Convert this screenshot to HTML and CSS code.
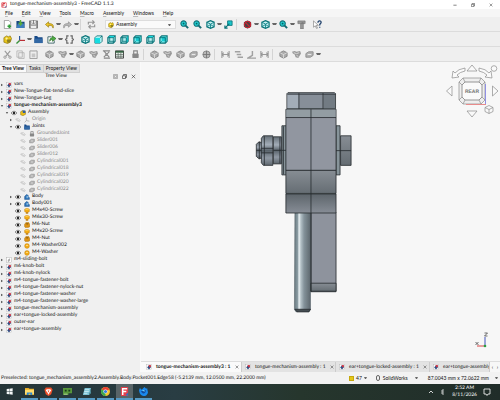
FILE: index.html
```
<!DOCTYPE html>
<html lang="en">
<head>
<meta charset="utf-8">
<title>tongue-mechanism-assembly3 - FreeCAD 1.1.3</title>
<link rel="stylesheet" href="styles.css">
</head>
<body>
<svg class="sprites" aria-hidden="true">
<defs>
<linearGradient id="steel" x1="0" x2="0" y1="0" y2="1"><stop offset="0" stop-color="#878d94"/><stop offset="1" stop-color="#656d73"/></linearGradient>
<linearGradient id="steelUp" x1="0" x2="0" y1="0" y2="1"><stop offset="0" stop-color="#5d656b"/><stop offset="1" stop-color="#878d96"/></linearGradient>
<linearGradient id="nut" x1="0" x2="0" y1="0" y2="1"><stop offset="0" stop-color="#667078"/><stop offset=".3" stop-color="#a3adb8"/><stop offset=".5" stop-color="#59636b"/><stop offset=".75" stop-color="#9099a4"/><stop offset="1" stop-color="#5e676e"/></linearGradient>
<linearGradient id="rod" x1="0" x2="1" y1="0" y2="0"><stop offset="0" stop-color="#687980"/><stop offset=".22" stop-color="#8fa0a7"/><stop offset=".28" stop-color="#f0f6f8"/><stop offset=".4" stop-color="#b4c1c7"/><stop offset=".6" stop-color="#84929a"/><stop offset="1" stop-color="#5e686e"/></linearGradient>
</defs>
<symbol id="app" viewBox="0 0 10 10"><rect x="1" y="1" width="8" height="8" rx="1" fill="#fff" stroke="#e03542"/><path d="M3 8V2.500h4M3 5h3" stroke="#d42c38" stroke-width="1.500" fill="none"/><path d="M6 9l3-3v3z" fill="#3566a5"/></symbol>
<symbol id="doc" viewBox="0 0 10 10"><rect x="1" y=".500" width="8" height="9" fill="#fff" stroke="#aaa" stroke-width=".600"/><path d="M2 6l3-4 3 1v3L5 9z" fill="#314f83"/><path d="M4 2l4-.500v3L6 6z" fill="#db303e"/></symbol>
<symbol id="docgray" viewBox="0 0 10 10"><rect x="1" y=".500" width="8" height="9" fill="#fff" stroke="#999" stroke-width=".600"/><path d="M3 8V5l3-3 1 3-2 3z" fill="#aaa"/></symbol>
<symbol id="new" viewBox="0 0 10 10"><path d="M1.500.500h5l2 2v7h-7z" fill="#fff" stroke="#777" stroke-width=".700"/><path d="M7 5v4M5 7h4" stroke="#2e9e36" stroke-width="1.700"/></symbol>
<symbol id="open" viewBox="0 0 10 10"><path d="M.500 9V1h3l1 1h5v7z" fill="#17457f"/><path d="M2 4h7v5H.500z" fill="#3e7fbb"/><path d="M5 0v4M3 3l2 2.500L7 3" stroke="#5caf35" stroke-width="1.500" fill="none"/></symbol>
<symbol id="save" viewBox="0 0 10 10"><path d="M.500 1h9v8h-9z" fill="#929292" stroke="#555" stroke-width=".700"/><path d="M2.500 1h5v4h-5zM2 6.500h6V9H2z" fill="#eee"/><path d="M5 0v4M3.500 3L5 4.500 6.500 3" stroke="#777" fill="none"/></symbol>
<symbol id="undo" viewBox="0 0 10 10"><path d="M9 9c1-4-1-5-5-5V2L.500 5 4 8V6c3 0 4 0 5 3z" fill="#f0c728" stroke="#8c7209" stroke-width=".700"/></symbol>
<symbol id="redo" viewBox="0 0 10 10"><path d="M1 9C0 5 2 4 6 4V2l3.500 3L6 8V6C3 6 2 6 1 9z" fill="#bbb" stroke="#888" stroke-width=".700"/></symbol>
<symbol id="refresh" viewBox="0 0 10 10"><path d="M1.500 5V2.500h6M8.500 5v2.500h-6M6 .500l2 2-2 2M4 5.500l-2 2 2 2" fill="none" stroke="#969696" stroke-width="1.300"/></symbol>
<symbol id="assembly" viewBox="0 0 10 10"><path d="M1 3l3-2 2 1 2-1 1.500 3L8 8 5 9.500 1 8z" fill="#e9c61a" stroke="#866c05" stroke-width=".700"/><path d="M4 5h5l-1 3-3 1z" fill="#8f8122"/><circle cx="4" cy="4" r="1.200" fill="#fff3a0"/></symbol>
<symbol id="asmblue" viewBox="0 0 10 10"><path d="M1 3l3-2 5 1 .500 5L5 9.500 1 8z" fill="#e9bd18" stroke="#806805" stroke-width=".700"/><path d="M4 1h5v4H5z" fill="#315ea0"/></symbol>
<symbol id="zoom" viewBox="0 0 10 10"><path d="M6 6l3 3" stroke="#136b73" stroke-width="2.200"/><circle cx="4" cy="4" r="3" fill="#20cdcf" stroke="#127279" stroke-width="1.200"/><path d="M3 4h2M4 3v2" stroke="#075258" stroke-width=".800"/></symbol>
<symbol id="cube" viewBox="0 0 10 10"><path d="M1 2.500L5 .700l4 1.800v5L5 9.300 1 7.500z" fill="#c9f2f2" stroke="#087277" stroke-width="1.300"/><path d="M1 2.500L5 4.500l4-2M5 4.500v5M1 7.500L5 5l4 2.500" fill="none" stroke="#14858a" stroke-width="1"/></symbol>
<symbol id="front" viewBox="0 0 10 10"><path d="M1 3l2-2h6v6L7 9H1z" fill="#dfffff" stroke="#087277"/><path d="M1 3h6v6H1z" fill="#15dce1"/><path d="M7 3l2-2" stroke="#087277"/></symbol>
<symbol id="top" viewBox="0 0 10 10"><path d="M1 3l2-2h6v6L7 9H1z" fill="#bff3f3" stroke="#087277" stroke-width="1.300"/><path d="M1 3l2-2h6L7 3z" fill="#15dce1"/><path d="M1 3h6v6M7 3l2-2M3 2v5h5M1 9l2-2" stroke="#087277" stroke-width=".900" fill="none"/></symbol>
<symbol id="right" viewBox="0 0 10 10"><path d="M1 3l2-2h6v6L7 9H1z" fill="#afeeee" stroke="#087277" stroke-width="1.300"/><path d="M7 3l2-2v6L7 9z" fill="#0ebec5"/><path d="M1 3h6v6M3 2v5h4M1 9l2-2" stroke="#087277" stroke-width=".900" fill="none"/></symbol>
<symbol id="rear" viewBox="0 0 10 10"><path d="M1 3l2-2h6v6L7 9H1z" fill="#7ef3f3" stroke="#087277" stroke-width="1.300"/><path d="M3 2h5v5H3z" fill="#18cbd0"/><path d="M1 3h6v6M1 9l2-2" stroke="#087277" fill="none"/></symbol>
<symbol id="link" viewBox="0 0 10 10"><path d="M4 1h5v5H4z" fill="#19c7cc" stroke="#117b80"/><path d="M6 4L1 9M1 6v3h3" stroke="#087277" stroke-width="1.300" fill="none"/></symbol>
<symbol id="nosel" viewBox="0 0 10 10"><path d="M1 2.500L5 .500l4 2v5l-4 2-4-2z" fill="#274c51"/><circle cx="5" cy="5" r="3.500" fill="#444" stroke="#c22633" stroke-width="1.300"/><path d="M2.500 2.500l5 5" stroke="#c22633" stroke-width="1.400"/></symbol>
<symbol id="measure" viewBox="0 0 10 10"><path d="M1 1h8v3H1zM5 3h2v7H4V4" fill="#999" stroke="#707070" stroke-width=".700"/></symbol>
<symbol id="help" viewBox="0 0 10 10"><path d="M.500 1v7l2-1.500 1.500 3L5 9 3.500 6H6z" fill="#fff" stroke="#777" stroke-width=".700"/><path d="M5.500 3c0-3 4-2.500 3.500 0L7.500 5v1M7.500 7.500v1" stroke="#24446e" stroke-width="1.400" fill="none"/></symbol>
<symbol id="axes" viewBox="0 0 10 10"><path d="M4 1v5" stroke="#28579b" stroke-width="1.300"/><path d="M4 6L.500 9.500" stroke="#38933c" stroke-width="1.500"/><path d="M4 6h6" stroke="#b92f35" stroke-width="1.300"/></symbol>
<symbol id="folder" viewBox="0 0 10 10"><path d="M.500 9V1h3l1 1.500h5V9z" fill="#174987"/><path d="M.500 4h9v5h-9z" fill="#3268a5"/></symbol>
<symbol id="export" viewBox="0 0 10 10"><path d="M5 2H1v7h7V6" fill="#fff" stroke="#376064"/><path d="M3 7c0-3 1-4 3-4V1l4 3-4 3V5C5 5 4 5 3 7z" fill="#4cae41" stroke="#246820" stroke-width=".700"/></symbol>
<symbol id="var" viewBox="0 0 10 10"><path d="M4 1H2v3L.500 5 2 6v3h2M6 1h2v3l1.500 1L8 6v3H6" fill="none" stroke="#666" stroke-width="1.300"/></symbol>
<symbol id="cut" viewBox="0 0 10 10"><path d="M2 1l5 6M8 1L3 7" stroke="#999" stroke-width="1.200"/><circle cx="2.200" cy="8" r="1.300" fill="none" stroke="#999"/><circle cx="7.800" cy="8" r="1.300" fill="none" stroke="#999"/></symbol>
<symbol id="copy" viewBox="0 0 10 10"><path d="M1 1h6v7H1zM3 3h6v6.500H3z" fill="#eee" stroke="#aaa" stroke-width=".800"/></symbol>
<symbol id="paste" viewBox="0 0 10 10"><path d="M1 1h8v8.500H1z" fill="#eee" stroke="#999"/><path d="M3 .500h4v1.500H3zM3 4h4v4H3z" fill="#c6c6c6"/></symbol>
<symbol id="part" viewBox="0 0 10 10"><path d="M1 3l4-2 4 2v4L5 9 1 7z" fill="#aaa" stroke="#858585"/><path d="M1 3l4 2 4-2M5 5v4" stroke="#e4e4e4" stroke-width=".800" fill="none"/></symbol>
<symbol id="parts" viewBox="0 0 10 10"><path d="M0 2l3-1 2 1 4-1 1 3-3 5-3-1-1-3-2-1z" fill="#999"/><path d="M2 3l3 1 3-1M5 6l2 1" stroke="#ddd" fill="none"/></symbol>
<symbol id="solve" viewBox="0 0 10 10"><path d="M1 1h8M2 9h7M2 1l6 7M8 2L2 8" stroke="#888" stroke-width="1.200"/><circle cx="5" cy="5" r="1.500" fill="#999"/></symbol>
<symbol id="table" viewBox="0 0 10 10"><path d="M.500 1h9v8h-9z" fill="#e7eee8" stroke="#353535"/><path d="M.500 1h9v2h-9z" fill="#356343"/><path d="M1 5h8M1 7h8M3.500 3v6M6.500 3v6" stroke="#536159" stroke-width=".700"/></symbol>
<symbol id="lock" viewBox="0 0 10 10"><path d="M3 5V1h4v4" fill="none" stroke="#888" stroke-width="1.300"/><rect x="1.500" y="4" width="7" height="5" rx="1" fill="#888"/></symbol>
<symbol id="ball" viewBox="0 0 10 10"><circle cx="5" cy="5" r="4" fill="#b9b9b9" stroke="#858585"/><path d="M5 1v8M1 5h8" stroke="#777"/></symbol>
<symbol id="slider" viewBox="0 0 10 10"><path d="M1 4l3-2h5v4L6 8H1z" fill="#b1b1b1" stroke="#8d8d8d"/><path d="M3 5h4" stroke="#eee"/></symbol>
<symbol id="distance" viewBox="0 0 10 10"><path d="M1 1v8M9 1v8M1 5h8M3 3L1 5l2 2M7 3l2 2-2 2" fill="none" stroke="#999" stroke-width="1.200"/></symbol>
<symbol id="parallel" viewBox="0 0 10 10"><path d="M1 2h6M3 5h5M4 8h6" stroke="#a1a1a1" stroke-width="1.700"/></symbol>
<symbol id="angle" viewBox="0 0 10 10"><path d="M6 1v5L1 9h9" fill="none" stroke="#a1a1a1" stroke-width="1.600"/></symbol>
<symbol id="eye" viewBox="0 0 10 10"><path d="M0 5q5-6 10 0-5 6-10 0z" fill="#eee" stroke="#555"/><circle cx="5" cy="4.800" r="2" fill="#222"/></symbol>
<symbol id="eyeoff" viewBox="0 0 10 10"><path d="M1 4q5-4 8 2-4 3-8-2zM2 3l6 5" fill="none" stroke="#bbb"/></symbol>
<symbol id="origin" viewBox="0 0 10 10"><path d="M4 1v5l5 1M4 6L1 9" stroke="#a6a6a6" stroke-width="1.200" fill="none"/></symbol>
<symbol id="body" viewBox="0 0 10 10"><path d="M1 4l3-3 3 1v3l2 1v3H1z" fill="#2b73b9" stroke="#174981" stroke-width=".700"/><path d="M4 3h3v4H4z" fill="#7eb1da"/></symbol>
<symbol id="screw" viewBox="0 0 10 10"><path d="M1 2q4-3 8 0v4q-4 3-8 0z" fill="#f4ad13" stroke="#b87707" stroke-width=".600"/><path d="M3 7h4v2.500H3z" fill="#bd7c12"/><path d="M2.500 2.500q3-1.500 5 0" stroke="#ffe28a" stroke-width="1.200" fill="none"/></symbol>
<symbol id="hexnut" viewBox="0 0 10 10"><path d="M1 4l2-3h5l1.500 3v4L7 9H2L1 8z" fill="#df9412" stroke="#9c6404" stroke-width=".700"/><ellipse cx="5.300" cy="3" rx="2" ry="1" fill="#835610"/></symbol>
<symbol id="washer" viewBox="0 0 10 10"><circle cx="5" cy="5" r="4" fill="#f2ab16" stroke="#c17f0c" stroke-width=".700"/><ellipse cx="5" cy="4" rx="2" ry="1" fill="#ffd879"/></symbol>
<symbol id="closed" viewBox="0 0 10 10"><path d="M3 2l4 3-4 3z" fill="#333"/></symbol>
<symbol id="opened" viewBox="0 0 10 10"><path d="M2 3h6L5 7z" fill="#333"/></symbol>
<symbol id="min" viewBox="0 0 10 10"><path d="M1 5.500h8" stroke="#333" stroke-width="1.500"/></symbol>
<symbol id="restore" viewBox="0 0 10 10"><path d="M1 3.500h6v5.500H1zM3 3V1h6v6H7" fill="none" stroke="#333" stroke-width="1.300"/></symbol>
<symbol id="box" viewBox="0 0 10 10"><path d="M1 1h8v8H1zM3 3h4v4H3z" fill="none" stroke="#777"/></symbol>
<symbol id="close" viewBox="0 0 10 10"><path d="M1.500 1.500l7 7M8.500 1.500l-7 7" stroke="#333" stroke-width="1.200"/></symbol>
<symbol id="win" viewBox="0 0 10 10"><path d="M1 1.500l3.500-.500v3.700H1zM5 1l4.500-.500v4.200H5zM1 5.300h3.500V9L1 8.500zM5 5.300h4.500v4.200L5 9z" fill="#f4f7f8"/></symbol>
<symbol id="files" viewBox="0 0 10 10"><path d="M0 1h4l1 1h5v7H0z" fill="#e5aa24"/><path d="M0 3h10v5H0z" fill="#ffdc6c"/><path d="M2 6h6v3H6V7.500H4V9H2z" fill="#2c87ce"/></symbol>
<symbol id="brave" viewBox="0 0 10 10"><path d="M2 .500h6L9.500 3 8 8 5 10 2 8 .500 3z" fill="#f0512c"/><path d="M3 2.500h4L8 4 6 6.500 5 8.500 4 6.500 2 4z" fill="#fff"/><path d="M4 4h2L5 6z" fill="#ea4b28"/></symbol>
<symbol id="chip" viewBox="0 0 10 10"><path d="M0 1h10v6H6v2H0z" fill="#58973c"/><path d="M2 3h2v2H2zM6 3h2v2H6z" fill="#18391d"/><path d="M1 8h4" stroke="#b7d69f"/></symbol>
<symbol id="note" viewBox="0 0 10 10"><path d="M3 1h7L8 9H1z" fill="#7cc3d6"/><path d="M3 3h5M2.500 5h5M2 7h4" stroke="#eafcff" stroke-width=".700"/><path d="M8 9l2-8v6z" fill="#4f8e9d"/></symbol>
<symbol id="chrome" viewBox="0 0 10 10"><circle cx="5" cy="5" r="5" fill="#f4c430"/><path d="M5 5L.700 2.500A5 5 0 0 1 9.400 2.500z" fill="#e84135"/><path d="M5 5L.700 2.500A5 5 0 0 0 5 10z" fill="#39a653"/><circle cx="5" cy="5" r="2.300" fill="#fff"/><circle cx="5" cy="5" r="1.800" fill="#367be0"/></symbol>
<symbol id="freecad" viewBox="0 0 10 10"><path d="M1 0h8v10H1z" fill="#e33e4b"/><path d="M3 9V2h5M3 5h4" stroke="#fff" stroke-width="1.700" fill="none"/><path d="M6 9l3-3v4z" fill="#3370c0"/></symbol>
<symbol id="fox" viewBox="0 0 10 10"><path d="M0 4l1-3 2 2 3-3 2 2 1-1 1 5q-1 4-5 4T0 4z" fill="#198aee"/><path d="M2 5q4-3 6-1-1 4-4 3z" fill="#124b9d"/><path d="M3 4q3-2 4 1-2 0-4-1z" fill="#70d7fc"/></symbol>
</svg>
<div class="window">
<header class="titlebar"><svg class="icon"><use href="#app"/></svg><span class="title">tongue-mechanism-assembly3 - FreeCAD 1.1.3</span>
<div class="caption"><button aria-label="Minimize"><svg><use href="#min"/></svg></button><button aria-label="Restore"><svg><use href="#restore"/></svg></button><button aria-label="Close"><svg><use href="#close"/></svg></button></div></header>
<nav class="menu"><button><u>F</u>ile</button><button><u>E</u>dit</button><button><u>V</u>iew</button><button><u>T</u>ools</button><button><u>M</u>acro</button><button><u>A</u>ssembly</button><button><u>W</u>indows</button><button><u>H</u>elp</button></nav>
<div class="toolbar">
<button class="tool" aria-label="New"><svg><use href="#new"/></svg></button><button class="tool" aria-label="Open"><svg><use href="#open"/></svg></button><button class="tool" aria-label="Save"><svg><use href="#save"/></svg></button><i class="space"></i>
<button class="tool drop" aria-label="Undo"><svg><use href="#undo"/></svg></button><button class="tool drop" aria-label="Redo"><svg><use href="#redo"/></svg></button><i class="sep"></i><button class="tool" aria-label="Refresh"><svg><use href="#refresh"/></svg></button>
<div class="workbench"><svg class="icon"><use href="#assembly"/></svg><select aria-label="Workbench"><option>Assembly</option></select><i class="caret"></i></div>
<button class="tool" aria-label="Fit all"><svg><use href="#zoom"/></svg></button><button class="tool" aria-label="Fit selection"><svg><use href="#zoom"/></svg></button><button class="tool drop" aria-label="View"><svg><use href="#cube"/></svg></button><button class="tool" aria-label="Link"><svg><use href="#link"/></svg></button><i class="sep"></i>
<button class="tool drop" aria-label="Draw style"><svg><use href="#nosel"/></svg></button><button class="tool drop" aria-label="Bounding box"><svg><use href="#cube"/></svg></button><button class="tool drop" aria-label="Selection view"><svg><use href="#zoom"/></svg></button><button class="tool" aria-label="Measure"><svg><use href="#measure"/></svg></button><i class="space"></i><button class="tool" aria-label="Help"><svg><use href="#help"/></svg></button>
</div>
<div class="toolbar">
<button class="tool" aria-label="Create part"><svg><use href="#assembly"/></svg></button><button class="tool drop" aria-label="Datums"><svg><use href="#axes"/></svg></button><button class="tool" aria-label="Group"><svg><use href="#folder"/></svg></button><button class="tool drop" aria-label="Make link"><svg><use href="#export"/></svg></button><button class="tool" aria-label="Variables"><svg><use href="#var"/></svg></button><i class="space"></i>
<button class="tool" aria-label="Isometric"><svg><use href="#cube"/></svg></button><button class="tool" aria-label="Front"><svg><use href="#front"/></svg></button><button class="tool" aria-label="Top"><svg><use href="#top"/></svg></button><button class="tool" aria-label="Right"><svg><use href="#right"/></svg></button><button class="tool" aria-label="Rear"><svg><use href="#rear"/></svg></button><button class="tool" aria-label="Bottom"><svg><use href="#top"/></svg></button><button class="tool" aria-label="Left"><svg><use href="#rear"/></svg></button>
</div>
<div class="toolbar">
<button class="tool" aria-label="Cut"><svg><use href="#cut"/></svg></button><button class="tool" aria-label="Copy"><svg><use href="#copy"/></svg></button><button class="tool" aria-label="Paste"><svg><use href="#paste"/></svg></button><i class="space"></i>
<button class="tool" aria-label="Assembly"><svg><use href="#part"/></svg></button><button class="tool drop" aria-label="Insert"><svg><use href="#parts"/></svg></button><button class="tool" aria-label="Solve"><svg><use href="#part"/></svg></button><button class="tool" aria-label="Explode"><svg><use href="#parts"/></svg></button><button class="tool" aria-label="Simulation"><svg><use href="#solve"/></svg></button><button class="tool" aria-label="Bill of materials"><svg><use href="#table"/></svg></button><i class="space"></i><button class="tool" aria-label="Ground"><svg><use href="#lock"/></svg></button><i class="sep"></i>
<button class="tool" aria-label="Fixed"><svg><use href="#part"/></svg></button><button class="tool" aria-label="Revolute"><svg><use href="#parts"/></svg></button><button class="tool" aria-label="Cylindrical"><svg><use href="#part"/></svg></button><button class="tool" aria-label="Slider"><svg><use href="#slider"/></svg></button><button class="tool" aria-label="Ball"><svg><use href="#ball"/></svg></button><i class="sep"></i>
<button class="tool" aria-label="Distance"><svg><use href="#distance"/></svg></button><button class="tool" aria-label="Parallel"><svg><use href="#parallel"/></svg></button><button class="tool" aria-label="Perpendicular"><svg><use href="#angle"/></svg></button><button class="tool" aria-label="Angle"><svg><use href="#distance"/></svg></button><i class="sep"></i>
<button class="tool" aria-label="Rack and pinion"><svg><use href="#part"/></svg></button><button class="tool" aria-label="Screw"><svg><use href="#parts"/></svg></button><button class="tool drop" aria-label="Gears"><svg><use href="#slider"/></svg></button>
</div>
<main class="work">
<aside class="side">
<div class="sidetabs"><button class="on">Tree View</button><button>Tasks</button><button>Property View</button></div>
<div class="dock"><span>Tree View</span><div class="dockbtns"><button aria-label="Overlay"><svg><use href="#box"/></svg></button><button aria-label="Float"><svg><use href="#restore"/></svg></button><button aria-label="Close panel"><svg><use href="#close"/></svg></button></div></div>
<ul class="tree">
<li><svg><use href="#closed"/></svg><svg class="kind"><use href="#doc"/></svg>vars</li>
<li><svg><use href="#closed"/></svg><svg class="kind"><use href="#doc"/></svg>New-Tongue-flat-tend-slice</li>
<li><svg><use href="#closed"/></svg><svg class="kind"><use href="#doc"/></svg>New-Tongue-Leg</li>
<li class="current"><svg><use href="#opened"/></svg><svg class="kind"><use href="#doc"/></svg>tongue-mechanism-assembly3</li>
<li class="l1"><svg><use href="#opened"/></svg><svg class="kind"><use href="#eye"/></svg><svg class="kind"><use href="#asmblue"/></svg>Assembly</li>
<li class="l2 off"><svg><use href="#closed"/></svg><svg class="kind"><use href="#eyeoff"/></svg><svg class="kind"><use href="#origin"/></svg>Origin</li>
<li class="l2"><svg><use href="#opened"/></svg><svg class="kind"><use href="#eye"/></svg><svg class="kind"><use href="#folder"/></svg>Joints</li>
<li class="l3 off"><svg></svg><svg class="kind"><use href="#eyeoff"/></svg><svg class="kind"><use href="#lock"/></svg>GroundedJoint</li>
<li class="l3 off"><svg></svg><svg class="kind"><use href="#eyeoff"/></svg><svg class="kind"><use href="#slider"/></svg>Slider001</li>
<li class="l3 off"><svg></svg><svg class="kind"><use href="#eyeoff"/></svg><svg class="kind"><use href="#slider"/></svg>Slider006</li>
<li class="l3 off"><svg></svg><svg class="kind"><use href="#eyeoff"/></svg><svg class="kind"><use href="#slider"/></svg>Slider012</li>
<li class="l3 off"><svg></svg><svg class="kind"><use href="#eyeoff"/></svg><svg class="kind"><use href="#slider"/></svg>Cylindrical001</li>
<li class="l3 off"><svg></svg><svg class="kind"><use href="#eyeoff"/></svg><svg class="kind"><use href="#slider"/></svg>Cylindrical018</li>
<li class="l3 off"><svg></svg><svg class="kind"><use href="#eyeoff"/></svg><svg class="kind"><use href="#slider"/></svg>Cylindrical019</li>
<li class="l3 off"><svg></svg><svg class="kind"><use href="#eyeoff"/></svg><svg class="kind"><use href="#slider"/></svg>Cylindrical020</li>
<li class="l3 off"><svg></svg><svg class="kind"><use href="#eyeoff"/></svg><svg class="kind"><use href="#slider"/></svg>Cylindrical022</li>
<li class="l2"><svg><use href="#closed"/></svg><svg class="kind"><use href="#eye"/></svg><svg class="kind"><use href="#body"/></svg>Body</li>
<li class="l2"><svg><use href="#closed"/></svg><svg class="kind"><use href="#eye"/></svg><svg class="kind"><use href="#body"/></svg>Body001</li>
<li class="l2"><svg></svg><svg class="kind"><use href="#eye"/></svg><svg class="kind"><use href="#screw"/></svg>M4x40-Screw</li>
<li class="l2"><svg></svg><svg class="kind"><use href="#eye"/></svg><svg class="kind"><use href="#screw"/></svg>M6x30-Screw</li>
<li class="l2"><svg></svg><svg class="kind"><use href="#eye"/></svg><svg class="kind"><use href="#hexnut"/></svg>M6-Nut</li>
<li class="l2"><svg></svg><svg class="kind"><use href="#eye"/></svg><svg class="kind"><use href="#screw"/></svg>M4x20-Screw</li>
<li class="l2"><svg></svg><svg class="kind"><use href="#eye"/></svg><svg class="kind"><use href="#hexnut"/></svg>M4-Nut</li>
<li class="l2"><svg></svg><svg class="kind"><use href="#eye"/></svg><svg class="kind"><use href="#washer"/></svg>M4-Washer002</li>
<li class="l2"><svg></svg><svg class="kind"><use href="#eye"/></svg><svg class="kind"><use href="#washer"/></svg>M4-Washer</li>
<li><svg><use href="#closed"/></svg><svg class="kind"><use href="#docgray"/></svg>m4-sliding-bolt</li>
<li><svg><use href="#closed"/></svg><svg class="kind"><use href="#doc"/></svg>m6-knob-bolt</li>
<li><svg><use href="#closed"/></svg><svg class="kind"><use href="#doc"/></svg>m6-knob-nylock</li>
<li><svg><use href="#closed"/></svg><svg class="kind"><use href="#doc"/></svg>m4-tongue-fastener-bolt</li>
<li><svg><use href="#closed"/></svg><svg class="kind"><use href="#doc"/></svg>m4-tongue-fastener-nylock-nut</li>
<li><svg><use href="#closed"/></svg><svg class="kind"><use href="#doc"/></svg>m4-tongue-fastener-washer</li>
<li><svg><use href="#closed"/></svg><svg class="kind"><use href="#doc"/></svg>m4-tongue-fastener-washer-large</li>
<li><svg><use href="#closed"/></svg><svg class="kind"><use href="#doc"/></svg>tongue-mechanism-assembly</li>
<li><svg><use href="#closed"/></svg><svg class="kind"><use href="#doc"/></svg>ear+tongue-locked-assembly</li>
<li><svg><use href="#closed"/></svg><svg class="kind"><use href="#doc"/></svg>outer-ear</li>
<li><svg><use href="#closed"/></svg><svg class="kind"><use href="#doc"/></svg>ear+tongue-assembly</li>
</ul>
</aside>
<section class="view">
<div class="canvas">
<svg class="model" viewBox="142 62 358 298" role="img" aria-label="Tongue assembly, rear view">
<g stroke="#252a2e" stroke-width=".8">
<path d="M257 144l2-2h5v16h-5l-2-2z" fill="url(#nut)"/><path d="M260 141v18M257 150h6"/>
<path d="M262 138l2-2.500h9.500v29.500H264l-2-2.500z" fill="url(#nut)"/><path d="M262 148h12M262 152.500h12M265 136v29"/>
<path d="M274 136.500h8v27h-8z" fill="url(#nut)"/><path d="M274 150h8M280.500 137v26"/>
<path d="M282.500 125.500h4.500V174.500h-4.500z" fill="#87949a"/><path d="M284 126v48M282 150h5"/>
<path d="M336.500 125.500h4V174.500h-4z" fill="#87949a"/><path d="M341 135.500h10.500V165H341z" fill="url(#steel)"/><path d="M336 150.300h15.500"/>
<path d="M287.500 93.500l1-1h46.500l1 1v15h-48.500z" fill="#878f99"/><path d="M288 94h11V108h-11z" fill="#a3adb8" stroke="none"/><path d="M324 94h11.500V108H324z" fill="#727b83" stroke="none"/><path d="M288 94h48M299.500 93v15.500M323.500 93v15.500"/>
<path d="M286.500 109h50v61h-50z" fill="#9196a0"/><path d="M287 109.500h49v7.500h-49z" fill="#939da3" stroke="none"/><path d="M286.500 117.300h50"/>
<path d="M286.500 170h50v23h-50z" fill="url(#steel)"/>
<path d="M295.500 211h15.500v97.500l-1.500 2.500h-13l-1.500-2.500z" fill="url(#rod)" stroke="#59646b" stroke-width=".6"/><path d="M295.500 308.500h15.500L309.500 311h-12z" fill="#454d52"/>
<path d="M311.500 212h25v79h-25z" fill="#8e939d"/><path d="M311.500 282.500h25v8h-25z" fill="url(#steel)"/>
<path d="M286.500 193.500h50v19h-50z" fill="url(#steelUp)"/><path d="M311.500 109v182"/>
</g></svg>
<svg class="navcube" viewBox="445 62 55 58" role="img" aria-label="Navigation cube">
<g fill="#fafafa" stroke="#8b8b8b" stroke-width=".7"><path d="M472 65l5 6h-10zM446.500 91l5.500-5v10zM498 91l-5.500-5v10zM472 117l5-6h-10z"/>
<path d="M465 68q-7 1-10 5l-2-2-1 7 7-1-2-2q3-3 8-4zM479 68q7 1 10 5l2-2 1 7-7-1 2-2q-3-3-8-4z"/><circle cx="494" cy="68.500" r="2.800"/>
<path d="M463 78h18l4 4v18l-4 4h-18l-4-4V82z" fill="#eee"/><path d="M465 82h14l3 3v12l-3 3h-14l-3-3V85z" stroke-width=".9"/><path d="M463 78l2 4M459 82l3 3M481 78l-2 4M485 82l-3 3M463 104l2-4M459 100l3-3M481 104l-2-4M485 100l-3-3"/>
<path d="M485 107.500l4-2 4 2v4l-4 2-4-2zM485 107.500l4 2 4-2M489 109.500v4"/></g><path d="M466 104.500h20" stroke="#e88b8b"/><path d="M485.500 104V84" stroke="#9090e4"/><text x="472" y="93">REAR</text></svg>
<svg class="axis" viewBox="472 330 20 20" role="img" aria-label="Axes"><path d="M485 345v-9" stroke="#4152bc"/><path d="M485 345h-8" stroke="#d94444"/><circle cx="485" cy="345" r="1.300" fill="#2b9d42"/><path d="M475.500 341l3 3M478.500 341l-3 3M484.500 332h3l-3 3h3" stroke="#333" stroke-width=".7" fill="none"/></svg>
</div>
<div class="doctabs"><div class="doctab on"><svg class="kind"><use href="#doc"/></svg><span>tongue-mechanism-assembly3 : 1</span><button aria-label="Close tab"><svg><use href="#close"/></svg></button></div><div class="doctab"><svg class="kind"><use href="#doc"/></svg><span>tongue-mechanism-assembly : 1</span><button aria-label="Close tab"><svg><use href="#close"/></svg></button></div><div class="doctab"><svg class="kind"><use href="#doc"/></svg><span>ear+tongue-locked-assembly : 1</span><button aria-label="Close tab"><svg><use href="#close"/></svg></button></div><div class="doctab last"><svg class="kind"><use href="#doc"/></svg><span>ear+tongue-assembly :</span></div><div class="scroll"><button aria-label="Scroll left">‹</button><button aria-label="Scroll right">›</button></div></div>
</section>
</main>
<footer class="status"><span class="msg">Preselected: tongue_mechanism_assembly2.Assembly.Body.Pocket001.Edge58 (-5.2139 mm, 12.0500 mm, 22.2000 mm)</span><button class="notes"><i class="yellow"></i>47<i class="caret"></i></button><button class="navstyle"><i class="mouse"></i>SolidWorks<i class="caret"></i></button><button class="dims">87.0043 mm x 72.0622 mm<i class="caret"></i></button></footer>
</div>
<div class="taskbar">
<button class="start" aria-label="Start"><svg><use href="#win"/></svg></button><button aria-label="Files"><svg><use href="#files"/></svg></button><button aria-label="Brave"><svg><use href="#brave"/></svg></button><button aria-label="Monitor"><svg><use href="#chip"/></svg></button><button aria-label="Notes"><svg><use href="#note"/></svg></button><button aria-label="Chrome"><svg><use href="#chrome"/></svg></button><button class="on" aria-label="FreeCAD"><svg><use href="#freecad"/></svg></button><button aria-label="Browser"><svg><use href="#fox"/></svg></button>
<div class="tray"><svg class="glyph" viewBox="0 0 6 6"><path d="M1 4l2-2 2 2" fill="none" stroke="#fff" stroke-width=".8"/></svg><svg class="glyph" viewBox="0 0 6 6"><path d="M4 1H2v4h2M2 3h2" fill="none" stroke="#fff" stroke-width=".7"/></svg><time>2:52 AM<br>8/11/2026</time><svg class="glyph bubble" viewBox="0 0 8 8"><path d="M1 1h6v5H5L4 7.500 3 6H1z" fill="none" stroke="#fff" stroke-width=".8"/></svg></div>
</div>
</body>
</html>
```
FILE: styles.css
```
* { box-sizing: border-box; }
body {
  margin: 0;
  min-height: 100vh;
  display: flex;
  flex-direction: column;
  overflow: hidden;
  font: 5px/7px Lato, "Open Sans", sans-serif;
  text-rendering: geometricPrecision;
  color: #111;
  background: #efefef;
}
button, select { font: inherit; color: inherit; border: 0; padding: 0; margin: 0; background: none; white-space: nowrap; }
svg { display: block; flex: none; }
.sprites { position: absolute; width: 0; height: 0; }
.window { flex: 1; display: flex; flex-direction: column; }
.icon { width: 6px; height: 6px; }
.titlebar { display: flex; align-items: center; gap: 3px; height: 9px; padding-left: 1px; background: #fff; }
.caption { display: flex; margin-left: auto; }
.caption button { width: 18px; display: grid; place-items: center; }
.caption svg { width: 4px; height: 4px; }
.menu { display: flex; gap: 9px; height: 8px; padding-left: 5px; background: #f6f6f6; }
.menu u { text-decoration-thickness: 1px; text-decoration-color: #bbb; text-underline-offset: 1px; }
.toolbar { display: flex; align-items: center; height: 15px; padding: 1px 0 0 1px; background: #efefef; border-bottom: 1px solid #dcdcdc; }
.tool { width: 13px; height: 13px; display: flex; align-items: center; padding-left: 2px; }
.tool svg { width: 9px; height: 9px; }
.drop { width: 18px; gap: 2px; }
.drop::after, .caret { content: ""; border: 1px solid transparent; border-top: 2px solid #666; border-bottom: 0; width: 3px; height: 2px; }
.sep { width: 5px; height: 11px; border-left: 1px solid #d4d4d4; margin-left: 1px; }
.space { width: 3px; }
.workbench { display: flex; align-items: center; width: 71px; height: 9px; margin: 0 2px 0 7px; padding: 0 4px 0 2px; gap: 2px; background: #fafafa; border: 1px solid #ddd; }
.workbench select { flex: 1; height: 7px; appearance: none; background: inherit; }
.work { flex: 1; display: grid; grid-template-columns: 141px 1fr; min-height: 0; }
.side { border-right: 1px solid #fafafa; background: #f0f0f0; }
.sidetabs { display: flex; margin-top: 2px; height: 9px; }
.sidetabs button { padding: 0 2px; background: #e1e1e1; border: 1px solid #d0d0d0; border-left: 0; }
.sidetabs .on { background: #fafafa; font-weight: 700; }
.dock { display: flex; align-items: center; justify-content: flex-end; height: 7px; padding-right: 4px; gap: 46px; }
.dockbtns { display: flex; gap: 4px; }
.dockbtns svg { width: 5px; height: 5px; }
.tree { list-style: none; margin: 0; padding: 1px 0 0; }
.tree li { display: flex; align-items: center; height: 7px; gap: 2px; white-space: nowrap; }
.tree svg { width: 4px; height: 4px; }
.tree .kind { width: 6px; height: 6px; }
.tree .kind + .kind { margin-left: 1px; }
.tree .l1 { padding-left: 5px; }
.tree .l2 { padding-left: 9px; }
.tree .l3 { padding-left: 14px; }
.tree .off { color: #888; }
.current { font-weight: 700; }
.view { display: flex; flex-direction: column; min-width: 0; background: #f7f7f7; }
.canvas { position: relative; flex: 1; }
.model { width: 100%; height: 100%; }
.navcube { position: absolute; top: 0; right: 0; width: 55px; height: 58px; }
.navcube text { font: 700 5px "Liberation Sans", sans-serif; fill: #777; text-anchor: middle; }
.axis { position: absolute; right: 8px; bottom: 10px; width: 20px; height: 20px; }
.doctabs { display: flex; height: 11px; background: #e9e9e9; border-top: 1px solid #ddd; overflow: hidden; }
.doctab { display: flex; align-items: center; flex: none; width: 94px; padding: 0 3px; gap: 4px; border-right: 1px solid #ccc; background: #e3e3e3; white-space: nowrap; }
.doctab .kind { width: 6px; height: 6px; }
.doctab button { margin-left: auto; }
.doctab button svg { width: 4px; height: 4px; }
.doctab.on { width: 101px; padding-left: 5px; font-weight: 700; background: #fafafa; }
.doctab.last { flex: 1; min-width: 0; padding-right: 0; overflow: hidden; }
.scroll { display: flex; background: #f7f7f7; }
.scroll button { width: 5px; }
.status { display: flex; align-items: center; height: 12px; padding: 0 2px 0 1px; background: #f2f2f2; white-space: nowrap; }
.msg { flex: 1; }
.status button { display: flex; align-items: center; }
.notes { gap: 2px; margin-right: 9px; }
.yellow { width: 5px; height: 5px; background: #e4c719; border: 1px solid #c6a90c; }
.navstyle { gap: 3px; margin-right: 10px; }
.navstyle .caret { margin-left: 4px; }
.mouse { width: 4px; height: 6px; border: 1px solid #666; border-radius: 2px; }
.dims { gap: 6px; }
.taskbar { display: flex; align-items: stretch; height: 16px; color: #fff; background: linear-gradient(90deg, #243437, #293d43 35%, #26362d 60%, #202d29); }
.taskbar button { width: 17px; margin-right: 2px; display: grid; place-items: center; border-bottom: 2px solid #579bc5; }
.taskbar button svg { width: 9px; height: 9px; }
.taskbar .start { width: 19px; border-color: transparent; }
.taskbar .start svg { width: 7px; height: 7px; }
.taskbar .on { background: #596568; }
.tray { display: flex; align-items: center; margin-left: auto; padding-right: 9px; gap: 6px; }
.tray time { text-align: center; }
.glyph { width: 6px; height: 6px; }
.bubble { width: 8px; height: 8px; }
```
